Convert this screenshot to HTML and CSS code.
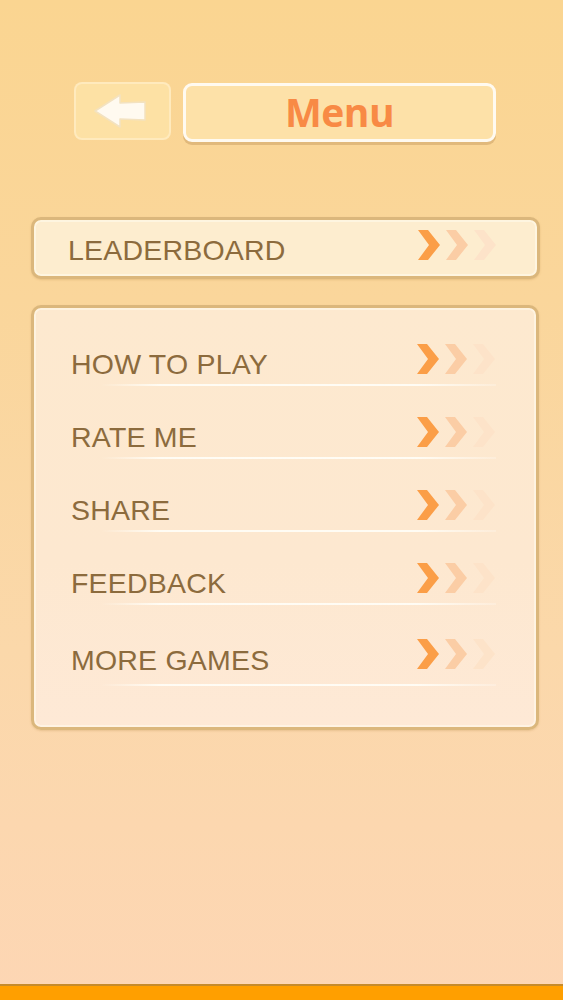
FILE: index.html
```html
<!DOCTYPE html>
<html>
<head>
<meta charset="utf-8">
<link rel="stylesheet" href="styles.css">
</head>
<body>
<div class="screen">
  <div class="header">
    <div class="back-btn">
      <svg width="56" height="36" viewBox="0 0 56 36">
        <polygon points="2,18 27,2 27,10 52,9 52,27 27,26 27,34" fill="#fffaf0" stroke="#f3e2c0" stroke-width="1.5" stroke-linejoin="round"/>
      </svg>
    </div>
    <div class="title-btn">Menu</div>
  </div>

  <div class="card single">
    <div class="row">
      <span class="label">LEADERBOARD</span>
      <span class="chevs">
        <svg width="80" height="30" viewBox="0 0 80 30">
          <polygon points="1,0 11,0 23,15 11,30 1,30 12,15" fill="#fb9e47"/>
          <polygon points="29,0 39,0 51,15 39,30 29,30 40,15" fill="#fbcda5"/>
          <polygon points="57,0 67,0 79,15 67,30 57,30 68,15" fill="#fde3c9"/>
        </svg>
      </span>
    </div>
  </div>

  <div class="card list">
    <div class="item">
      <span class="label">HOW TO PLAY</span>
      <span class="chevs"><svg width="80" height="30" viewBox="0 0 80 30"><polygon points="1,0 11,0 23,15 11,30 1,30 12,15" fill="#fb9e47"/><polygon points="29,0 39,0 51,15 39,30 29,30 40,15" fill="#fbcda5"/><polygon points="57,0 67,0 79,15 67,30 57,30 68,15" fill="#fde3c9"/></svg></span>
    </div>
    <div class="item">
      <span class="label">RATE ME</span>
      <span class="chevs"><svg width="80" height="30" viewBox="0 0 80 30"><polygon points="1,0 11,0 23,15 11,30 1,30 12,15" fill="#fb9e47"/><polygon points="29,0 39,0 51,15 39,30 29,30 40,15" fill="#fbcda5"/><polygon points="57,0 67,0 79,15 67,30 57,30 68,15" fill="#fde3c9"/></svg></span>
    </div>
    <div class="item">
      <span class="label">SHARE</span>
      <span class="chevs"><svg width="80" height="30" viewBox="0 0 80 30"><polygon points="1,0 11,0 23,15 11,30 1,30 12,15" fill="#fb9e47"/><polygon points="29,0 39,0 51,15 39,30 29,30 40,15" fill="#fbcda5"/><polygon points="57,0 67,0 79,15 67,30 57,30 68,15" fill="#fde3c9"/></svg></span>
    </div>
    <div class="item">
      <span class="label">FEEDBACK</span>
      <span class="chevs"><svg width="80" height="30" viewBox="0 0 80 30"><polygon points="1,0 11,0 23,15 11,30 1,30 12,15" fill="#fb9e47"/><polygon points="29,0 39,0 51,15 39,30 29,30 40,15" fill="#fbcda5"/><polygon points="57,0 67,0 79,15 67,30 57,30 68,15" fill="#fde3c9"/></svg></span>
    </div>
    <div class="item last">
      <span class="label">MORE GAMES</span>
      <span class="chevs"><svg width="80" height="30" viewBox="0 0 80 30"><polygon points="1,0 11,0 23,15 11,30 1,30 12,15" fill="#fb9e47"/><polygon points="29,0 39,0 51,15 39,30 29,30 40,15" fill="#fbcda5"/><polygon points="57,0 67,0 79,15 67,30 57,30 68,15" fill="#fde3c9"/></svg></span>
    </div>
  </div>

  <div class="spacer"></div>
  <div class="bottom-bar"></div>
</div>
</body>
</html>
```
FILE: styles.css
```css
html, body {
  margin: 0;
  padding: 0;
}
body {
  width: 563px;
  height: 1000px;
  overflow: hidden;
  font-family: "Liberation Sans", Arial, sans-serif;
}
.screen {
  height: 1000px;
  display: flex;
  flex-direction: column;
  background: linear-gradient(180deg, #fad591 0%, #fad69b 30%, #fbd8aa 65%, #fdd6b4 100%);
}
.header {
  display: flex;
  align-items: flex-start;
  gap: 12px;
  margin: 82px 0 0 74px;
}
.back-btn {
  width: 93px;
  height: 54px;
  border: 2px solid rgba(255, 238, 200, 0.7);
  border-radius: 8px;
  background: rgba(253, 228, 170, 0.75);
  display: flex;
  align-items: center;
  justify-content: center;
  box-sizing: content-box;
}
.back-btn svg {
  margin-left: -4px;
}
.title-btn {
  width: 307px;
  height: 53px;
  margin-top: 1px;
  border: 3px solid #fffaf0;
  border-radius: 9px;
  background: #fde1a8;
  box-shadow: 0 3px 0 rgba(196, 150, 90, 0.45);
  color: #f88a45;
  font-family: "Open Sans", "Liberation Sans", sans-serif;
  font-weight: 700;
  font-size: 39px;
  line-height: 52px;
  text-align: center;
  letter-spacing: -0.5px;
}
.card {
  margin-left: 31px;
  border: 3px solid #dbb77c;
  border-radius: 10px;
  box-shadow: inset 0 0 0 2px rgba(255, 250, 235, 0.6), 0 1px 2px rgba(180, 130, 60, 0.25);
}
.single {
  width: 503px;
  height: 56px;
  margin-top: 75px;
  background: #fdedcf;
}
.row {
  height: 56px;
  display: flex;
  align-items: center;
  justify-content: space-between;
  padding: 0 40px 0 34px;
}
.row .label {
  margin-top: 4px;
}
.row .chevs {
  margin-top: -6px;
}
.label {
  color: #8c6b3d;
  font-size: 28.5px;
  letter-spacing: 0.2px;
}
.chevs {
  display: flex;
}
.list {
  width: 502px;
  height: 416px;
  margin-top: 26px;
  background: linear-gradient(180deg, #fde9cf 0%, #fde8d0 60%, #fee9d6 100%);
  padding-top: 3px;
  box-sizing: content-box;
}
.item {
  height: 73px;
  margin: 0 40px 0 37px;
  display: flex;
  align-items: flex-end;
  justify-content: space-between;
  position: relative;
  box-sizing: border-box;
  padding-bottom: 4px;
}
.item:first-child {
  height: 74px;
}
.item::after {
  content: "";
  position: absolute;
  left: 30px;
  right: 0;
  bottom: -1px;
  height: 2px;
  background: linear-gradient(90deg, rgba(255,255,255,0) 0%, rgba(255,253,246,0.95) 15%, rgba(255,253,246,0.95) 80%, rgba(255,255,255,0.2) 100%);
}
.item .chevs {
  margin-bottom: 7px;
}
.item.last {
  height: 81px;
  padding-bottom: 8px;
}
.item.last .chevs {
  margin-bottom: 8px;
}
.spacer {
  flex: 1;
}
.bottom-bar {
  height: 14px;
  border-top: 2px solid #c58b2c;
  background: #ff9f00;
}
```
